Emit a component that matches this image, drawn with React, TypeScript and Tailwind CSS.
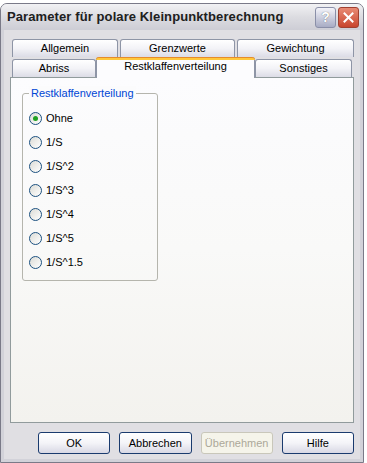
const options = ["Ohne", "1/S", "1/S^2", "1/S^3", "1/S^4", "1/S^5", "1/S^1.5"];

const font = "font-['Tahoma','Liberation_Sans',sans-serif]";

function Tab({ label, className }: { label: string; className: string }) {
  return (
    <div
      className={`${className} flex items-center justify-center rounded-t-[3px] border border-b-0 border-[#8e95a6] bg-gradient-to-b from-white via-[#f3f3f7] to-[#dcdce6] text-[11px] text-black`}
    >
      {label}
    </div>
  );
}

function Radio({ label, checked }: { label: string; checked?: boolean }) {
  return (
    <div className="flex h-6 items-center">
      <span className="flex h-[13px] w-[13px] items-center justify-center rounded-full border border-[#1c5180] bg-gradient-to-br from-[#dcdcd6] to-white">
        {checked && <span className="h-[5px] w-[5px] rounded-full bg-[#21a121]" />}
      </span>
      <span className="ml-[4px] text-[11px] text-black">{label}</span>
    </div>
  );
}

function Button({ label, disabled }: { label: string; disabled?: boolean }) {
  return (
    <div
      className={
        disabled
          ? "flex h-[22px] w-[73px] items-center justify-center rounded-[3px] border border-[#c9c7ba] bg-[#f5f4ea] text-[11px] text-[#aca899]"
          : "flex h-[22px] w-[73px] items-center justify-center rounded-[3px] border border-[#1a3b6e] bg-gradient-to-b from-white via-[#f4f4f8] to-[#d8d8e4] text-[11px] text-black"
      }
    >
      {label}
    </div>
  );
}

export default function App() {
  return (
    <div className={`h-[463px] w-[367px] overflow-hidden bg-white pt-[3px] ${font}`}>
      <div className="flex h-[460px] w-[364px] flex-col overflow-hidden rounded-t-[7px] border border-[#7a7a88] bg-[#e0dfe3]">
        {/* Titelleiste */}
        <div className="flex h-[26px] shrink-0 items-center bg-gradient-to-b from-[#f2f2f4] via-[#dcdce1] to-[#cdcdd5] pl-[6px] pr-[4px]">
          <span className="min-w-0 flex-1 whitespace-nowrap text-[13px] font-bold tracking-[0.1px] text-[#202020]">
            Parameter für polare Kleinpunktberechnung
          </span>
          <div className="flex h-[21px] w-[21px] items-center justify-center rounded-[3px] border border-[#8a8fa8] bg-gradient-to-b from-[#f4f4fa] to-[#a8acc4] text-[14px] font-bold text-white [text-shadow:0_0_1px_#555]">
            ?
          </div>
          <div className="ml-[2px] flex h-[21px] w-[21px] items-center justify-center rounded-[3px] border border-[#a04030] bg-gradient-to-b from-[#e88a74] to-[#c8432c]">
            <svg width="11" height="11" viewBox="0 0 11 11">
              <path d="M1.5 1.5 L9.5 9.5 M9.5 1.5 L1.5 9.5" stroke="white" strokeWidth="2" strokeLinecap="square" />
            </svg>
          </div>
        </div>

        {/* Inhalt */}
        <div className="flex flex-1 flex-col border-x-[3px] border-b-[3px] border-[#d2d2d9] px-[6px] pt-[9px]">
          {/* Registerkarten */}
          <div className="flex gap-[2px] pl-[2px]">
            <Tab label="Allgemein" className="h-[18px] w-[106px]" />
            <Tab label="Grenzwerte" className="h-[18px] w-[115px]" />
            <Tab label="Gewichtung" className="h-[18px] w-[117px]" />
          </div>
          <div className="flex items-end pl-[2px]">
            <Tab label="Abriss" className="h-[18px] w-[84px]" />
            <div className="relative z-10 -mb-px flex h-[21px] w-[159px] items-center justify-center rounded-t-[3px] border-x border-[#8e95a6] bg-[#fcfcfe] pb-[2px] text-[11px] text-black">
              <span className="absolute inset-x-[-1px] top-0 h-[3px] rounded-t-[3px] border-t border-[#e68b2c] bg-[#ffc83c]" />
              Restklaffenverteilung
            </div>
            <Tab label="Sonstiges" className="h-[18px] w-[97px]" />
          </div>

          {/* Seite */}
          <div className="h-[346px] w-[344px] border border-[#919b9c] bg-gradient-to-b from-[#fcfcfe] via-[#f9f9f8] to-[#f3f2ee] pl-[11px] pt-[15px]">
            <div className="relative h-[188px] w-[136px] rounded-[3px] border border-[#b5b5ad] pl-[6px] pt-[12px]">
              <span className="absolute left-[6px] top-[-8px] bg-[#fbfbfc] px-[2px] text-[11px] leading-[14px] text-[#0046d5]">
                Restklaffenverteilung
              </span>
              {options.map((o, i) => (
                <Radio key={o} label={o} checked={i === 0} />
              ))}
            </div>
          </div>

          {/* Schaltflächen */}
          <div className="mt-[9px] flex gap-[9px] pl-[28px]">
            <Button label="OK" />
            <Button label="Abbrechen" />
            <Button label="Übernehmen" disabled />
            <Button label="Hilfe" />
          </div>
        </div>
      </div>
    </div>
  );
}
